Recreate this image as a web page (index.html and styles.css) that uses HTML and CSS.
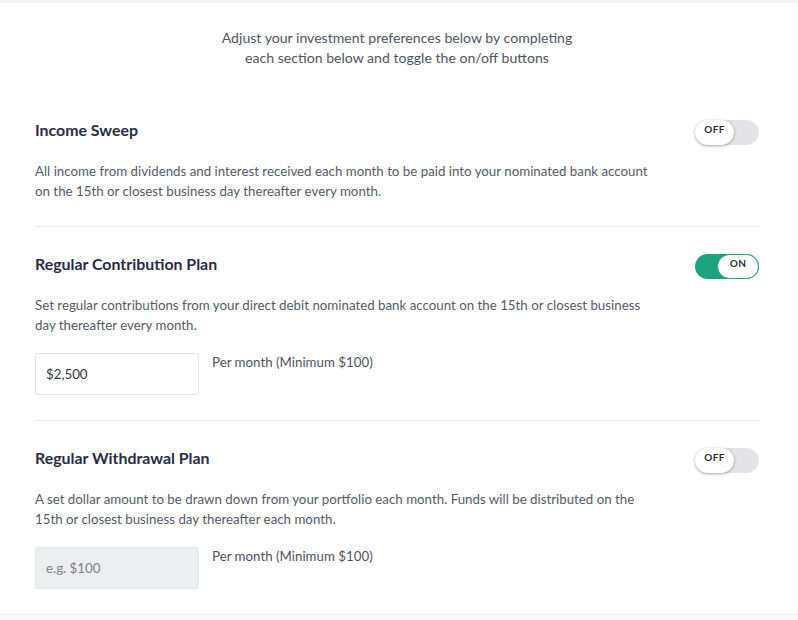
FILE: index.html
```html
<!DOCTYPE html>
<html lang="en">
<head>
<meta charset="utf-8">
<title>Investment preferences</title>
<link rel="stylesheet" href="styles.css">
</head>
<body>
<div class="page">
  <p class="intro">Adjust your investment preferences below by completing<br>each section below and toggle the on/off buttons</p>

  <section class="plan plan-first">
    <div class="plan-head">
      <h2 class="plan-title">Income Sweep</h2>
      <div class="toggle toggle-off"><span class="knob">OFF</span></div>
    </div>
    <p class="plan-desc">All income from dividends and interest received each month to be paid into your nominated bank account<br>on the 15th or closest business day thereafter every month.</p>
  </section>

  <section class="plan">
    <div class="plan-head">
      <h2 class="plan-title">Regular Contribution Plan</h2>
      <div class="toggle toggle-on"><span class="knob">ON</span></div>
    </div>
    <p class="plan-desc">Set regular contributions from your direct debit nominated bank account on the 15th or closest business<br>day thereafter every month.</p>
    <div class="amount-row">
      <div class="amount-input">$2,500</div>
      <span class="amount-note">Per month (Minimum $100)</span>
    </div>
  </section>

  <section class="plan plan-last">
    <div class="plan-head">
      <h2 class="plan-title">Regular Withdrawal Plan</h2>
      <div class="toggle toggle-off"><span class="knob">OFF</span></div>
    </div>
    <p class="plan-desc">A set dollar amount to be drawn down from your portfolio each month. Funds will be distributed on the<br>15th or closest business day thereafter each month.</p>
    <div class="amount-row">
      <div class="amount-input amount-disabled">e.g. $100</div>
      <span class="amount-note">Per month (Minimum $100)</span>
    </div>
  </section>
</div>
<div class="footer-bar"></div>
</body>
</html>
```

FILE: styles.css
```css
* { box-sizing: border-box; }

html, body {
  margin: 0;
  padding: 0;
  background: #ffffff;
}

body {
  font-family: "Lato", "Open Sans", sans-serif;
  color: #555a66;
  border-top: 3px solid #f3f3f4;
}

.page {
  padding: 0 39px 0 35px;
}

.intro {
  margin: 0;
  padding-top: 25px;
  text-align: center;
  font-size: 14.1px;
  line-height: 20px;
  color: #4f5563;
}

.plan {
  padding: 27px 0 25px;
  border-bottom: 1px solid #ededee;
}

.plan-first {
  padding-top: 52px;
}

.plan-last {
  border-bottom: none;
}

.plan-head {
  display: flex;
  align-items: center;
  justify-content: space-between;
  height: 25px;
}

.plan-title {
  margin: 0 0 7px;
  font-size: 15.9px;
  font-weight: 700;
  color: #2a2c44;
}

.plan-desc {
  margin: 16px 0 0;
  font-size: 13.3px;
  line-height: 20px;
  color: #565b67;
}

.toggle {
  position: relative;
  width: 64px;
  height: 25px;
  border-radius: 13px;
  display: flex;
}

.toggle-off {
  background: #e4e4e7;
  justify-content: flex-start;
}

.toggle-on {
  background: #1fa27e;
  justify-content: flex-end;
}

.knob {
  display: flex;
  justify-content: center;
  align-items: flex-start;
  padding-top: 3px;
  height: 25px;
  border-radius: 13px;
  background: #ffffff;
  font-size: 10px;
  font-weight: 700;
  color: #2d2f3a;
  letter-spacing: 0.3px;
}

.toggle-off .knob {
  width: 39px;
  box-shadow: 0 1px 3px rgba(0, 0, 0, 0.35);
}

.toggle-on .knob {
  width: 42px;
  border: 1.5px solid #1fa27e;
  padding-top: 2px;
}

.amount-row {
  display: flex;
  align-items: flex-start;
  gap: 13px;
  margin-top: 18px;
}

.amount-input {
  width: 164px;
  height: 42px;
  border: 1px solid #e2e3e5;
  border-radius: 3px;
  padding: 0 10px;
  display: flex;
  align-items: center;
  font-size: 13.3px;
  color: #34363f;
  background: #ffffff;
}

.amount-disabled {
  background: #edeef0;
  color: #7a7e88;
  border-color: #e4e5e7;
}

.amount-note {
  font-size: 13.3px;
  line-height: 20px;
  color: #4f5460;
  margin-top: -1px;
}

.footer-bar {
  height: 20px;
  background: #f8f8f8;
  border-top: 1px solid #ececed;
}
```
